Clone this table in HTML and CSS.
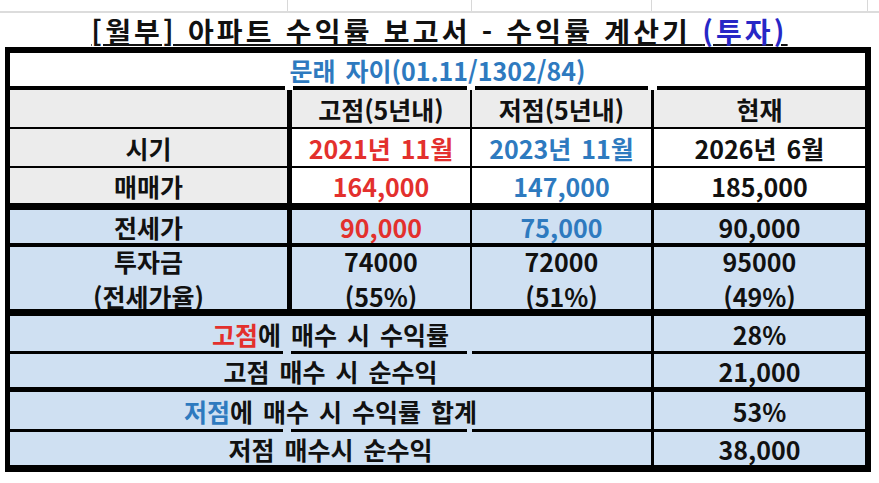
FILE: index.html
```html
<!DOCTYPE html>
<html lang="ko">
<head>
<meta charset="utf-8">
<title>수익률 계산기</title>
<link rel="stylesheet" href="styles.css">
</head>
<body>
<div class="top"><span></span><span></span><span></span><span></span><span class="last"></span></div>
<div class="title"><span class="ttl">[월부] 아파트 수익률 보고서 - 수익률 계산기 <span class="inv">(투자)</span></span></div>
<div class="sheet">
  <div class="r name"><div class="full blue-t">문래 자이(01.11/1302/84)</div></div>
  <div class="sep sep-a"><i class="a1"></i><i class="a2"></i><i class="a3"></i><i class="a4"></i></div>
  <div class="r head gray">
    <div class="c1"></div>
    <div class="c2">고점(5년내)</div>
    <div class="c3">저점(5년내)</div>
    <div class="c4">현재</div>
  </div>
  <div class="r t1">
    <div class="c1 gray">시기</div>
    <div class="c2 red">2021년 11월</div>
    <div class="c3 blue-t">2023년 11월</div>
    <div class="c4">2026년 6월</div>
  </div>
  <div class="r t2">
    <div class="c1 gray">매매가</div>
    <div class="c2 red">164,000</div>
    <div class="c3 blue-t">147,000</div>
    <div class="c4">185,000</div>
  </div>
  <div class="r t3 blue">
    <div class="c1">전세가</div>
    <div class="c2 red">90,000</div>
    <div class="c3 blue-t">75,000</div>
    <div class="c4">90,000</div>
  </div>
  <div class="r t4 blue">
    <div class="c1"><div class="two">투자금<br>(전세가율)</div></div>
    <div class="c2"><div class="two">74000<br>(55%)</div></div>
    <div class="c3"><div class="two">72000<br>(51%)</div></div>
    <div class="c4"><div class="two">95000<br>(49%)</div></div>
  </div>
  <div class="r t5 blue">
    <div class="cm"><span class="red">고점</span>에 매수 시 수익률</div>
    <div class="c4">28%</div>
  </div>
  <div class="sep sep-b"><i class="b1"></i><i class="b2"></i><i class="b3"></i></div>
  <div class="r t6 blue">
    <div class="cm">고점 매수 시 순수익</div>
    <div class="c4">21,000</div>
  </div>
  <div class="r t7 blue">
    <div class="cm"><span class="blue-t">저점</span>에 매수 시 수익률 합계</div>
    <div class="c4">53%</div>
  </div>
  <div class="sep sep-b"><i class="b1"></i><i class="b2"></i><i class="b3"></i></div>
  <div class="r t8 blue">
    <div class="cm">저점 매수시 순수익</div>
    <div class="c4">38,000</div>
  </div>
</div>
</body>
</html>
```

FILE: styles.css
```css
html, body {
  margin: 0;
  padding: 0;
  background: #ffffff;
}

body {
  font-family: "Noto Sans CJK KR", "Noto Sans", sans-serif;
  color: #111111;
  width: 879px;
  height: 483px;
  overflow: hidden;
}

/* faint spreadsheet gridlines above the title */
.top {
  display: grid;
  grid-template-columns: 288px 184px 180px 216px 1fr;
  height: 11px;
  border-bottom: 2px solid #dcdcdc;
}

.top span {
  border-right: 1px solid #d8d8d8;
}

.top span.last {
  border-right: none;
}

.title {
  height: 34px;
  overflow: hidden;
  text-align: center;
  font-size: 28px;
  font-weight: 700;
  line-height: 36px;
  letter-spacing: 3.2px;
  color: #111111;
  white-space: nowrap;
}

.ttl {
  text-decoration: underline;
  text-decoration-thickness: 2px;
  text-underline-offset: 1px;
}

.inv {
  color: #2727c6;
}

.sheet {
  margin-left: 5px;
  width: 866px;
  box-sizing: border-box;
  border-style: solid;
  border-color: #000000;
  border-width: 6px 6px 7px 5px;
}

.r {
  display: flex;
  font-size: 25px;
  font-weight: 700;
  word-spacing: 3px;
}

.r > div {
  display: flex;
  align-items: center;
  justify-content: center;
  white-space: nowrap;
  overflow: hidden;
}

.full {
  flex: 1;
}

.c1 {
  width: 277px;
}

.c2 {
  width: 178px;
  border-left: 5px solid #000000;
}

.c3 {
  width: 179px;
  border-left: 2px solid #000000;
}

.c4 {
  flex: 1;
  border-left: 3px solid #000000;
}

.cm {
  width: 641px;
}

.gray {
  background: #ececec;
}

.blue {
  background: #cfe0f2;
}

.red {
  color: #e3302d;
}

.blue-t {
  color: #2e7abf;
}

/* row heights and bottom rules */
.name {
  height: 33px;
  background: #ffffff;
}

.head {
  height: 37px;
  border-bottom: 2px solid #000000;
}

.t1 {
  height: 37px;
  border-bottom: 2px solid #000000;
}

.t2 {
  height: 35px;
  border-bottom: 7px solid #000000;
}

.t3 {
  height: 33px;
  border-bottom: 4px solid #000000;
}

.t4 {
  height: 62px;
  border-bottom: 7px solid #000000;
}

.t4 > div {
  align-items: flex-start;
}

.two {
  line-height: 35px;
  margin-top: -3px;
  text-align: center;
}

.t5 {
  height: 35px;
}

.t6 {
  height: 33px;
  border-bottom: 5px solid #000000;
}

.t7 {
  height: 37px;
}

.t8 {
  height: 33px;
}

/* separators drawn as segments, leaving the small gaps of merged cells */
.sep {
  display: flex;
}

.sep i {
  display: block;
  background: #000000;
}

.sep-a {
  height: 4px;
  background: #ffffff;
}

.a1 { width: 275px; }
.a2 { width: 174px; margin-left: 8px; }
.a3 { width: 173px; margin-left: 8px; }
.a4 { width: 208px; margin-left: 9px; }

.sep-b {
  height: 3px;
  background: #cfe0f2;
}

.b1 { width: 273px; }
.b2 { width: 176px; margin-left: 8px; }
.b3 { flex: 1; margin-left: 5px; }
```
